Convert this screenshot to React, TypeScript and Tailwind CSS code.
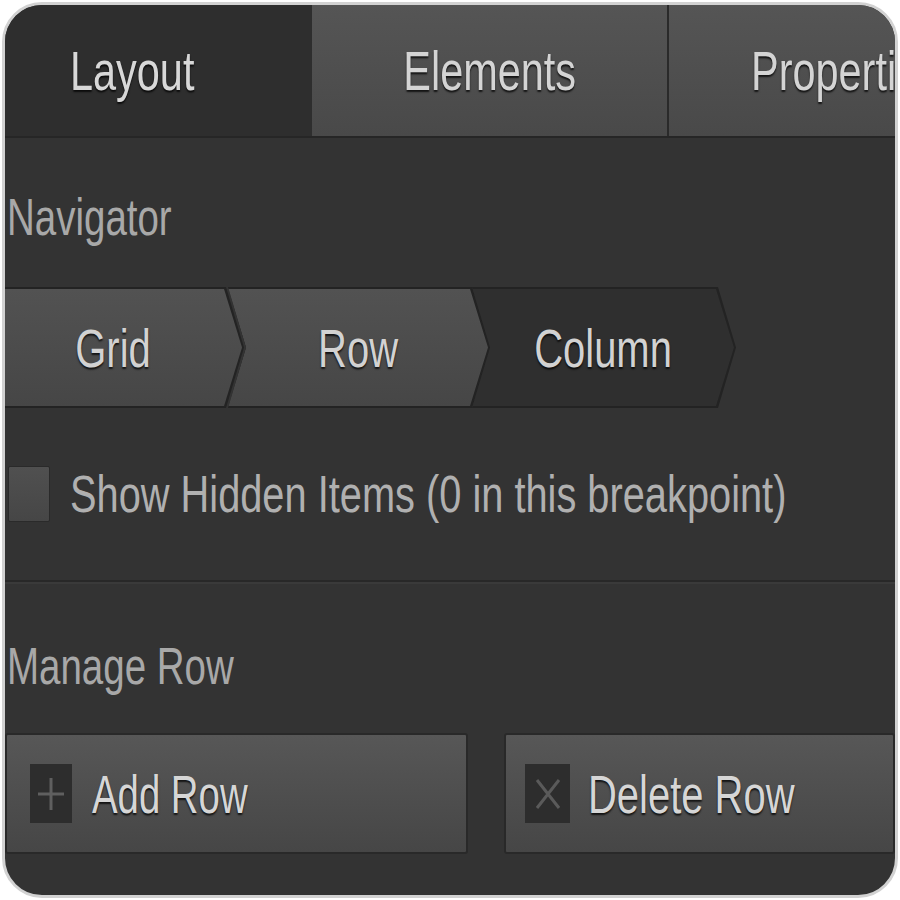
import type { ReactNode } from "react";

// narrow text: the source looks horizontally squeezed, so scale glyphs on x
function T({
  children,
  className = "",
  sx = "scale-x-[0.74]",
}: {
  children: ReactNode;
  className?: string;
  sx?: string;
}) {
  return <span className={`inline-block whitespace-nowrap ${sx} ${className}`}>{children}</span>;
}

const shadow = "[text-shadow:0_2px_2px_rgba(0,0,0,0.75)]";

const crumbs = [
  {
    label: "Grid",
    w: "w-[239px]",
    ml: "",
    pad: "pr-[20px]",
    clip: "[clip-path:polygon(0_0,calc(100%-18px)_0,100%_50%,calc(100%-18px)_100%,0_100%)]",
    bg: "bg-gradient-to-b from-[#525252] to-[#464646]",
  },
  {
    label: "Row",
    w: "w-[262px]",
    ml: "-ml-[16px]",
    pad: "",
    clip: "[clip-path:polygon(0_0,calc(100%-18px)_0,100%_50%,calc(100%-18px)_100%,0_100%,18px_50%)]",
    bg: "bg-gradient-to-b from-[#525252] to-[#464646]",
  },
  {
    label: "Column",
    w: "w-[264px]",
    ml: "-ml-[18px]",
    pad: "",
    clip: "[clip-path:polygon(0_0,calc(100%-18px)_0,100%_50%,calc(100%-18px)_100%,0_100%,18px_50%)]",
    bg: "bg-[#2f2f2f]",
  },
];

export default function App() {
  return (
    <div
      className="h-[900px] w-[900px] bg-white p-[2px]"
      style={{ fontFamily: '"Liberation Sans", Arial, sans-serif' }}
    >
      <div className="h-full overflow-hidden rounded-[40px] border-[3px] border-[#d2d2d2] bg-[#333333]">
        {/* Tabs */}
        <div className="flex h-[133px] border-b-2 border-[#262626]">
          <div className="flex w-[307px] shrink-0 items-center bg-[#2e2e2e] pl-[65px]">
            <T className={`origin-left text-[56px] leading-none text-[#d8d8d8] ${shadow}`}>Layout</T>
          </div>
          <div className="flex w-[355px] shrink-0 items-center justify-center bg-gradient-to-b from-[#555555] to-[#494949]">
            <T className={`origin-center text-[56px] leading-none text-[#d4d4d4] ${shadow}`}>Elements</T>
          </div>
          <div className="flex min-w-0 flex-1 items-center overflow-hidden border-l-2 border-[#2a2a2a] bg-gradient-to-b from-[#555555] to-[#494949] pl-[82px]">
            <T className={`origin-left text-[56px] leading-none text-[#d4d4d4] ${shadow}`}>Properties</T>
          </div>
        </div>

        <div className="flex flex-col">
          {/* Navigator */}
          <div className="mt-[49px] flex h-[60px] items-center pl-[2px]">
            <T className="origin-left text-[52px] leading-none text-[#a8a8a8]">Navigator</T>
          </div>

          <div className="mt-[40px] flex h-[121px]">
            {crumbs.map((c) => (
              <div key={c.label} className={`h-full shrink-0 ${c.w} ${c.ml} ${c.clip} bg-[#232323] py-[2px] pr-[2px]`}>
                <div className={`flex h-full items-center justify-center ${c.pad} ${c.clip} ${c.bg}`}>
                  <T className={`origin-center text-[54px] leading-none text-[#d2d2d2] ${shadow}`}>{c.label}</T>
                </div>
              </div>
            ))}
          </div>

          {/* Hidden items checkbox */}
          <div className="mt-[58px] flex h-[56px] items-center pl-[3px]">
            <div className="h-[56px] w-[42px] shrink-0 rounded-[2px] border border-[#2a2a2a] bg-gradient-to-b from-[#505050] to-[#464646]" />
            <T
              sx="scale-x-[0.765]"
              className="ml-[20px] origin-left text-[52px] leading-none text-[#b0b0b0]"
            >
              Show Hidden Items (0 in this breakpoint)
            </T>
          </div>

          <div className="mt-[58px] h-[2px] bg-[#282828]" />
          <div className="h-[2px] bg-[#3a3a3a]" />

          {/* Manage Row */}
          <div className="mt-[52px] flex h-[60px] items-center pl-[2px]">
            <T className="origin-left text-[52px] leading-none text-[#a8a8a8]">Manage Row</T>
          </div>

          <div className="mt-[37px] flex h-[121px] gap-[36px]">
            <button className="flex h-full w-[463px] shrink-0 items-center rounded-[3px] border-2 border-[#292929] bg-gradient-to-b from-[#575757] to-[#464646] pl-[23px]">
              <span className="flex h-[59px] w-[42px] items-center justify-center bg-[#2d2d2d]">
                <svg width="28" height="36" viewBox="0 0 28 36">
                  <path d="M14 2v32M1 18h26" stroke="#5f5f5f" strokeWidth="3" fill="none" />
                </svg>
              </span>
              <T
                sx="scale-x-[0.71]"
                className={`ml-[20px] origin-left text-[54px] leading-none text-[#d6d6d6] ${shadow}`}
              >
                Add Row
              </T>
            </button>
            <button className="flex h-full min-w-0 flex-1 items-center rounded-[3px] border-2 border-[#292929] bg-gradient-to-b from-[#575757] to-[#464646] pl-[19px]">
              <span className="flex h-[59px] w-[45px] shrink-0 items-center justify-center bg-[#2d2d2d]">
                <svg width="26" height="32" viewBox="0 0 26 32">
                  <path d="M2 2l22 28M24 2L2 30" stroke="#5a5a5a" strokeWidth="3" fill="none" />
                </svg>
              </span>
              <T className={`ml-[18px] origin-left text-[54px] leading-none text-[#d6d6d6] ${shadow}`}>Delete Row</T>
            </button>
          </div>
        </div>
      </div>
    </div>
  );
}
